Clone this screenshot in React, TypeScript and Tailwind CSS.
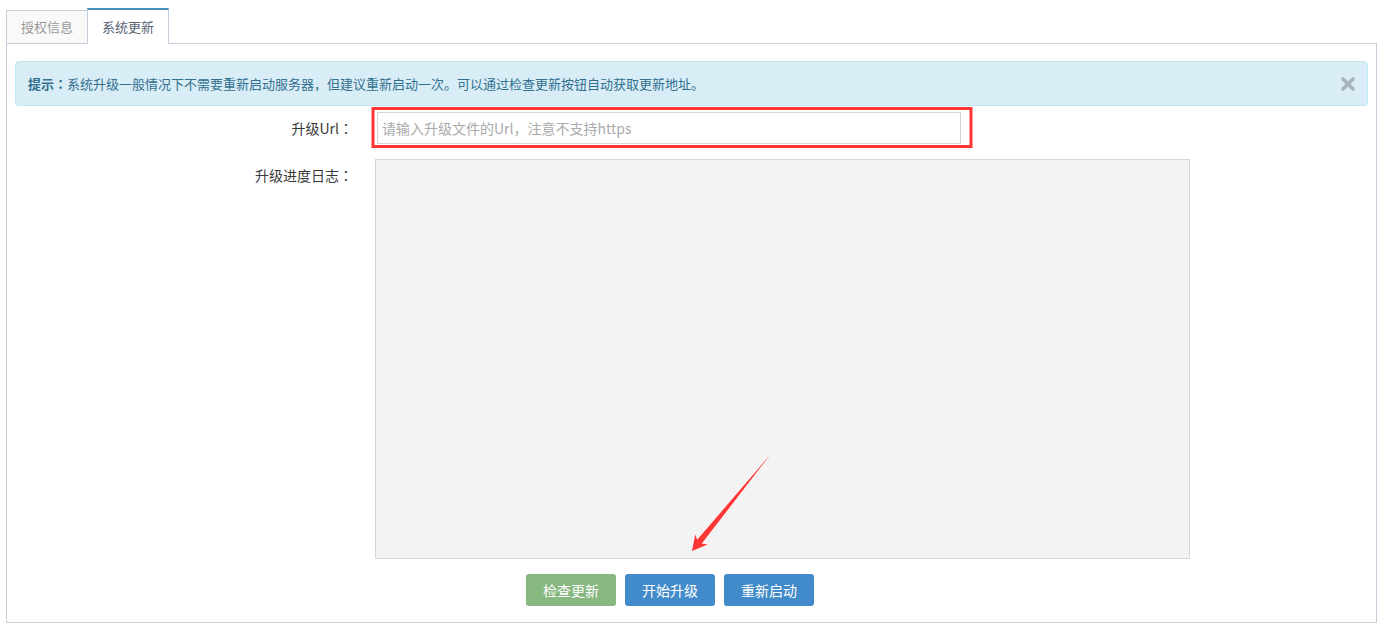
import React from "react";

const jp = { fontFamily: '"Noto Sans CJK JP", "Noto Sans CJK SC", sans-serif' };

function Colon() {
  return <span style={jp}>：</span>;
}

export default function App() {
  const font = { fontFamily: '"Noto Sans CJK SC", "Noto Sans", sans-serif' };
  return (
    <div className="relative w-[1383px] h-[642px] bg-white text-[#393939]" style={font}>
      {/* Tabs */}
      <div className="flex items-end pl-[6px] pt-[8px]">
        <div className="w-[82px] h-[33px] border border-b-0 border-[#c5d0dc] bg-[#f9f9f9] text-[#999] text-[13px] flex items-center justify-center">
          授权信息
        </div>
        <div className="relative z-10 -ml-px -mb-px w-[82px] h-[36px] border border-b-0 border-[#c5d0dc] border-t-2 border-t-[#4c8fbd] bg-white text-[#576373] text-[13px] flex items-center justify-center">
          系统更新
        </div>
      </div>

      {/* Content box */}
      <div className="ml-[6px] w-[1371px] border border-[#c5d0dc] pt-[17px] pl-[8px] pr-[8px] pb-[16px]">
        {/* Alert */}
        <div className="h-[45px] rounded-[4px] border border-[#bce8f1] bg-[#d9edf7] text-[#31708f] text-[13px] flex items-center justify-between pl-[12px] pr-[12px]">
          <div>
            <span className="font-bold">提示<Colon /></span>系统升级一般情况下不需要重新启动服务器<span style={jp}>，</span>但建议重新启动一次。可以通过检查更新按钮自动获取更新地址。
          </div>
          <svg width="14" height="14" viewBox="0 0 14 14">
            <path d="M2 2 L12 12 M12 2 L2 12" stroke="#a9b4bc" strokeWidth="3.6" strokeLinecap="round" />
          </svg>
        </div>

        {/* Url row */}
        <div className="mt-[6px] flex items-center">
          <div className="w-[338px] text-right text-[14px] text-[#393939]">升级Url<Colon /></div>
          <input
            className="ml-[24px] w-[584px] h-[32px] border border-[#d5d5d5] px-[4px] text-[14px] placeholder:text-[#aaa] outline-none"
            placeholder="请输入升级文件的Url，注意不支持https"
            style={font}
          />
        </div>

        {/* Log row */}
        <div className="mt-[15px] flex items-start">
          <div className="w-[338px] pt-[6px] text-right text-[14px] text-[#393939]">升级进度日志<Colon /></div>
          <div className="ml-[22px] w-[815px] h-[400px] border border-[#d5d5d5] bg-[#f3f3f3]" />
        </div>

        {/* Buttons */}
        <div className="mt-[15px] flex gap-[9px] pl-[511px]">
          <button className="w-[90px] h-[32px] rounded-[3px] bg-[#87b87f] text-white text-[14px]">检查更新</button>
          <button className="w-[90px] h-[32px] rounded-[3px] bg-[#428bca] text-white text-[14px]">开始升级</button>
          <button className="w-[90px] h-[32px] rounded-[3px] bg-[#428bca] text-white text-[14px]">重新启动</button>
        </div>
      </div>

      {/* Annotation overlay */}
      <svg className="absolute left-0 top-0 pointer-events-none" width="1383" height="642">
        <rect x="373" y="108.5" width="598" height="38" fill="none" stroke="#ff3636" strokeWidth="3" />
        <polygon
          points="770,455 701.8,543.6 707.6,544.4 692,551 695.2,534.4 697.2,539.8"
          fill="#ff3636"
        />
      </svg>
    </div>
  );
}
